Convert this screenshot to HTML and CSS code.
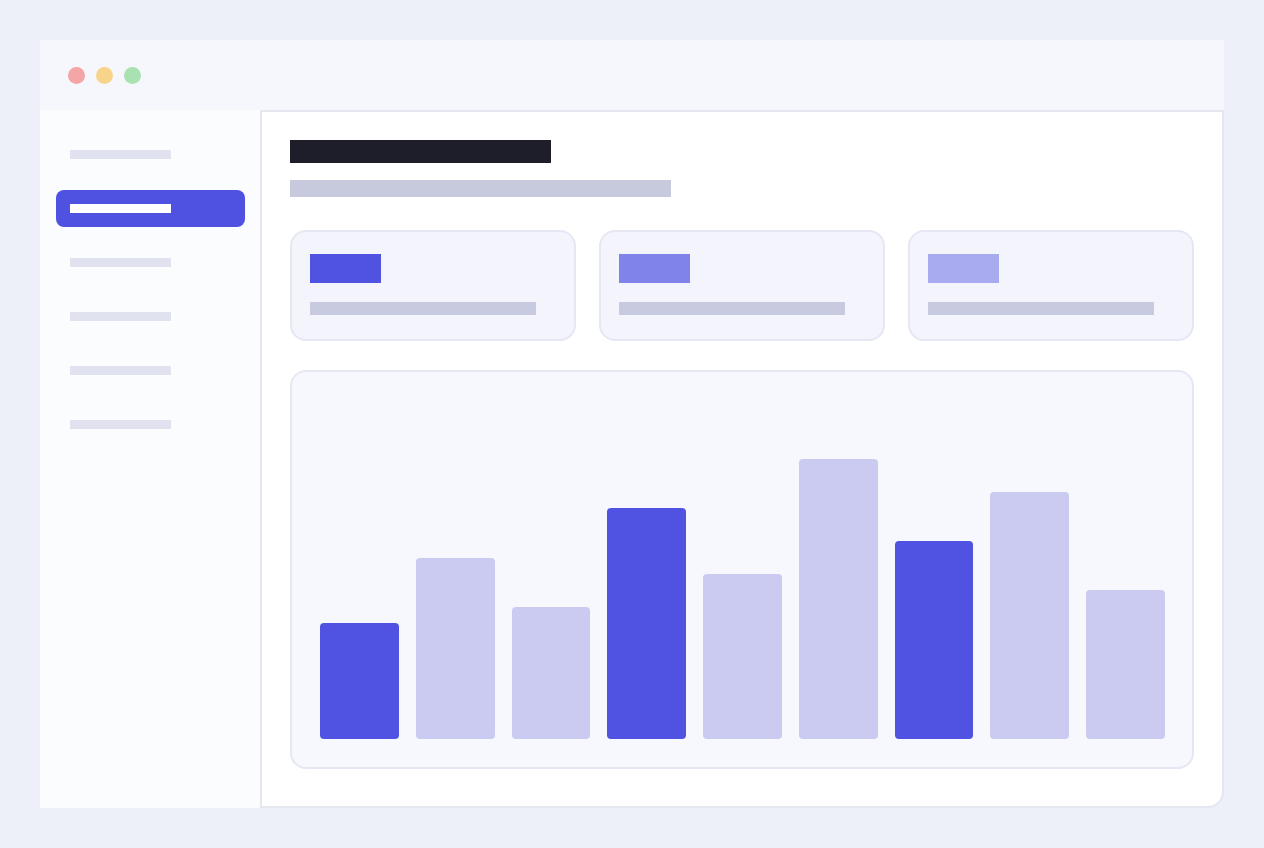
FILE: index.html
```html
<!DOCTYPE html>
<html>
<head>
<meta charset="utf-8">
<link rel="stylesheet" href="styles.css">
</head>
<body>
<div class="window">
  <div class="titlebar">
    <span class="dot red"></span>
    <span class="dot yellow"></span>
    <span class="dot green"></span>
  </div>
  <div class="body">
    <nav class="sidebar">
      <div class="nav-item"><span class="nav-bar"></span></div>
      <div class="nav-item active"><span class="nav-bar"></span></div>
      <div class="nav-item"><span class="nav-bar"></span></div>
      <div class="nav-item"><span class="nav-bar"></span></div>
      <div class="nav-item"><span class="nav-bar"></span></div>
      <div class="nav-item"><span class="nav-bar"></span></div>
    </nav>
    <main class="main">
      <div class="title"></div>
      <div class="subtitle"></div>
      <div class="cards">
        <div class="card"><div class="stat s1"></div><div class="stat-line"></div></div>
        <div class="card"><div class="stat s2"></div><div class="stat-line"></div></div>
        <div class="card"><div class="stat s3"></div><div class="stat-line"></div></div>
      </div>
      <div class="chart">
        <div class="bar dark" style="height:116px"></div>
        <div class="bar light" style="height:181px"></div>
        <div class="bar light" style="height:132px"></div>
        <div class="bar dark" style="height:231px"></div>
        <div class="bar light" style="height:165px"></div>
        <div class="bar light" style="height:280px"></div>
        <div class="bar dark" style="height:198px"></div>
        <div class="bar light" style="height:247px"></div>
        <div class="bar light" style="height:149px"></div>
      </div>
    </main>
  </div>
</div>
</body>
</html>
```
FILE: styles.css
```css
* { box-sizing: border-box; }
html, body { margin: 0; padding: 0; }
body {
  background: #eef0f9;
  padding: 40px;
  font-family: "Liberation Sans", Arial, sans-serif;
}
.window {
  width: 1184px;
  height: 768px;
  display: flex;
  flex-direction: column;
}
.titlebar {
  height: 70px;
  background: #f6f7fc;
  display: flex;
  align-items: center;
  gap: 11px;
  padding-left: 28px;
}
.dot {
  width: 17px;
  height: 17px;
  border-radius: 50%;
  display: block;
}
.red { background: #f4a5a5; }
.yellow { background: #f8d48b; }
.green { background: #a9e1b0; }
.body {
  flex: 1;
  display: flex;
}
.sidebar {
  width: 220px;
  background: #fbfcfe;
  padding: 26px 15px 0 16px;
  display: flex;
  flex-direction: column;
  gap: 17px;
}
.nav-item {
  height: 37px;
  padding-left: 14px;
  display: flex;
  align-items: center;
  border-radius: 8px;
}
.nav-bar {
  display: block;
  width: 101px;
  height: 9px;
  background: #e1e2ef;
}
.nav-item.active { background: #4f52e0; }
.nav-item.active .nav-bar { background: #ffffff; }
.main {
  flex: 1;
  background: #ffffff;
  border: 2px solid #e4e6f0;
  border-bottom-right-radius: 16px;
  padding: 28px 28px 0 28px;
}
.title {
  width: 261px;
  height: 23px;
  background: #1e1e2a;
}
.subtitle {
  width: 381px;
  height: 17px;
  background: #c7cadd;
  margin-top: 17px;
}
.cards {
  display: flex;
  gap: 23px;
  margin-top: 33px;
}
.card {
  flex: 1;
  height: 111px;
  background: #f3f4fc;
  border: 2px solid #e5e7f3;
  border-radius: 16px;
  padding: 22px 18px 0 18px;
}
.stat {
  width: 71px;
  height: 29px;
}
.s1 { background: #5053e1; }
.s2 { background: #8083ea; }
.s3 { background: #a9abf0; }
.stat-line {
  width: 226px;
  height: 13px;
  background: #c8cadf;
  margin-top: 19px;
}
.chart {
  margin-top: 29px;
  height: 399px;
  background: #f7f8fd;
  border: 2px solid #e5e7f2;
  border-radius: 16px;
  padding: 28px 27px 28px 28px;
  display: flex;
  align-items: flex-end;
  gap: 17px;
}
.bar {
  flex: 1;
  border-radius: 4px;
}
.bar.dark { background: #5053e1; }
.bar.light { background: #cbcbf1; }
```
